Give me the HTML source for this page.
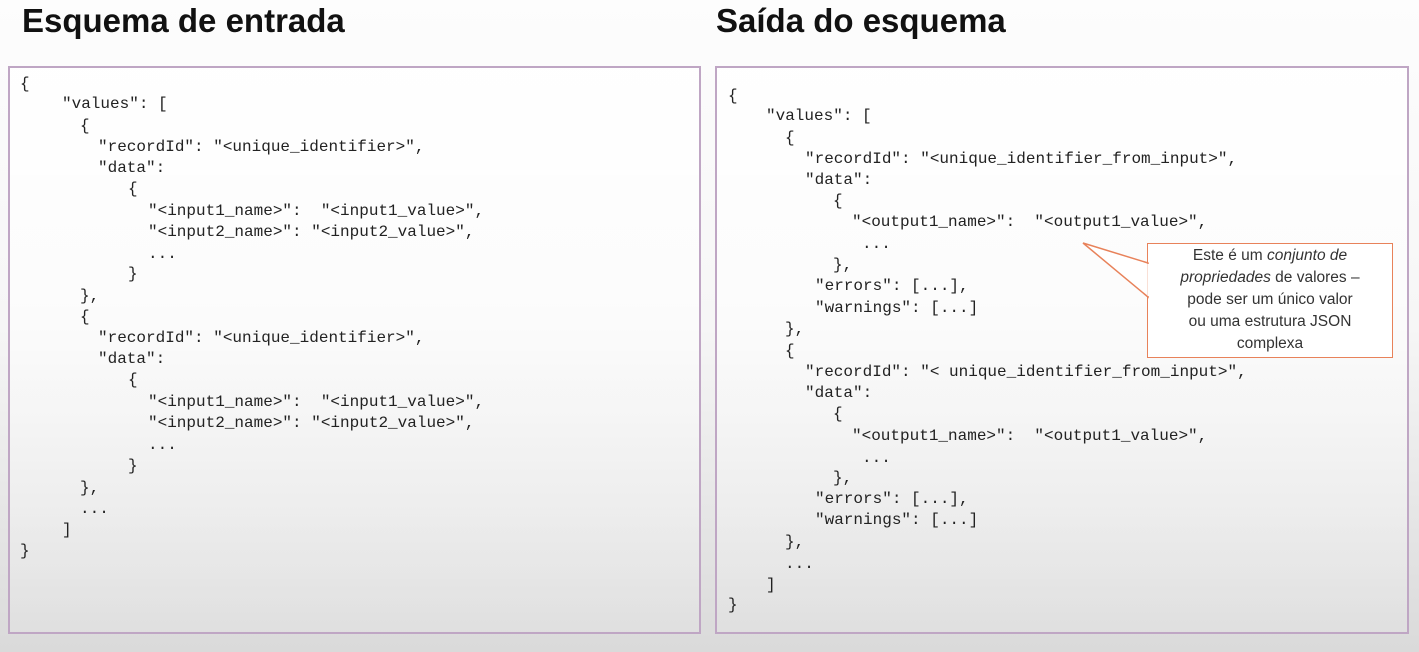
<!DOCTYPE html>
<html><head><meta charset="utf-8"><style>
body{margin:0;width:1419px;height:652px;overflow:hidden;background:linear-gradient(#fdfdfd 0%,#f6f6f6 50%,#dadada 100%);font-family:"Liberation Sans",sans-serif;position:relative}
h1{position:absolute;margin:0;font-size:33px;font-weight:bold;color:#111;top:2px}
.box{position:absolute;top:66px;height:568px;border:2px solid #bfa6c4;box-sizing:border-box;background:linear-gradient(rgba(255,255,255,.9),rgba(255,255,255,.1))}
.l{position:absolute;font-family:"Liberation Mono",monospace;font-size:16px;color:#222;white-space:pre;line-height:18px}
.call{position:absolute;left:1147px;top:243px;width:246px;height:115px;border:1.5px solid #e8825a;background:#fff;box-sizing:border-box;text-align:center;font-size:15.5px;line-height:22px;color:#333;padding-top:1px}
</style></head><body>
<h1 style="left:22px">Esquema de entrada</h1>
<h1 style="left:716px">Saída do esquema</h1>
<div class="box" style="left:8px;width:693px"></div>
<div class="box" style="left:715px;width:694px"></div>
<div class="l" style="left:20px;top:75px">{</div>
<div class="l" style="left:62px;top:95px">"values": [</div>
<div class="l" style="left:80px;top:117px">{</div>
<div class="l" style="left:98px;top:138px">"recordId": "&lt;unique_identifier&gt;",</div>
<div class="l" style="left:98px;top:159px">"data":</div>
<div class="l" style="left:128px;top:180px">{</div>
<div class="l" style="left:148px;top:202px">"&lt;input1_name&gt;":  "&lt;input1_value&gt;",</div>
<div class="l" style="left:148px;top:223px">"&lt;input2_name&gt;": "&lt;input2_value&gt;",</div>
<div class="l" style="left:148px;top:245px">...</div>
<div class="l" style="left:128px;top:265px">}</div>
<div class="l" style="left:80px;top:287px">},</div>
<div class="l" style="left:80px;top:308px">{</div>
<div class="l" style="left:98px;top:329px">"recordId": "&lt;unique_identifier&gt;",</div>
<div class="l" style="left:98px;top:350px">"data":</div>
<div class="l" style="left:128px;top:371px">{</div>
<div class="l" style="left:148px;top:393px">"&lt;input1_name&gt;":  "&lt;input1_value&gt;",</div>
<div class="l" style="left:148px;top:414px">"&lt;input2_name&gt;": "&lt;input2_value&gt;",</div>
<div class="l" style="left:148px;top:436px">...</div>
<div class="l" style="left:128px;top:457px">}</div>
<div class="l" style="left:80px;top:479px">},</div>
<div class="l" style="left:80px;top:500px">...</div>
<div class="l" style="left:62px;top:521px">]</div>
<div class="l" style="left:20px;top:542px">}</div>

<div class="l" style="left:728px;top:87px">{</div>
<div class="l" style="left:766px;top:107px">"values": [</div>
<div class="l" style="left:785px;top:129px">{</div>
<div class="l" style="left:805px;top:150px">"recordId": "&lt;unique_identifier_from_input&gt;",</div>
<div class="l" style="left:805px;top:171px">"data":</div>
<div class="l" style="left:833px;top:192px">{</div>
<div class="l" style="left:852px;top:213px">"&lt;output1_name&gt;":  "&lt;output1_value&gt;",</div>
<div class="l" style="left:862px;top:235px">...</div>
<div class="l" style="left:833px;top:256px">},</div>
<div class="l" style="left:815px;top:277px">"errors": [...],</div>
<div class="l" style="left:815px;top:299px">"warnings": [...]</div>
<div class="l" style="left:785px;top:320px">},</div>
<div class="l" style="left:785px;top:342px">{</div>
<div class="l" style="left:805px;top:363px">"recordId": "&lt; unique_identifier_from_input&gt;",</div>
<div class="l" style="left:805px;top:384px">"data":</div>
<div class="l" style="left:833px;top:405px">{</div>
<div class="l" style="left:852px;top:427px">"&lt;output1_name&gt;":  "&lt;output1_value&gt;",</div>
<div class="l" style="left:862px;top:449px">...</div>
<div class="l" style="left:833px;top:469px">},</div>
<div class="l" style="left:815px;top:490px">"errors": [...],</div>
<div class="l" style="left:815px;top:511px">"warnings": [...]</div>
<div class="l" style="left:785px;top:533px">},</div>
<div class="l" style="left:785px;top:555px">...</div>
<div class="l" style="left:766px;top:576px">]</div>
<div class="l" style="left:728px;top:596px">}</div>

<div class="call">Este é um <i>conjunto de<br>propriedades</i> de valores –<br>pode ser um único valor<br>ou uma estrutura JSON<br>complexa</div>
<svg style="position:absolute;left:0;top:0" width="1419" height="652"><polygon points="1148,263 1083,243 1148,297" fill="#fff" stroke="#e8825a" stroke-width="1.5"/><line x1="1148.5" y1="264" x2="1148.5" y2="296" stroke="#fff" stroke-width="2"/></svg>
</body></html>
